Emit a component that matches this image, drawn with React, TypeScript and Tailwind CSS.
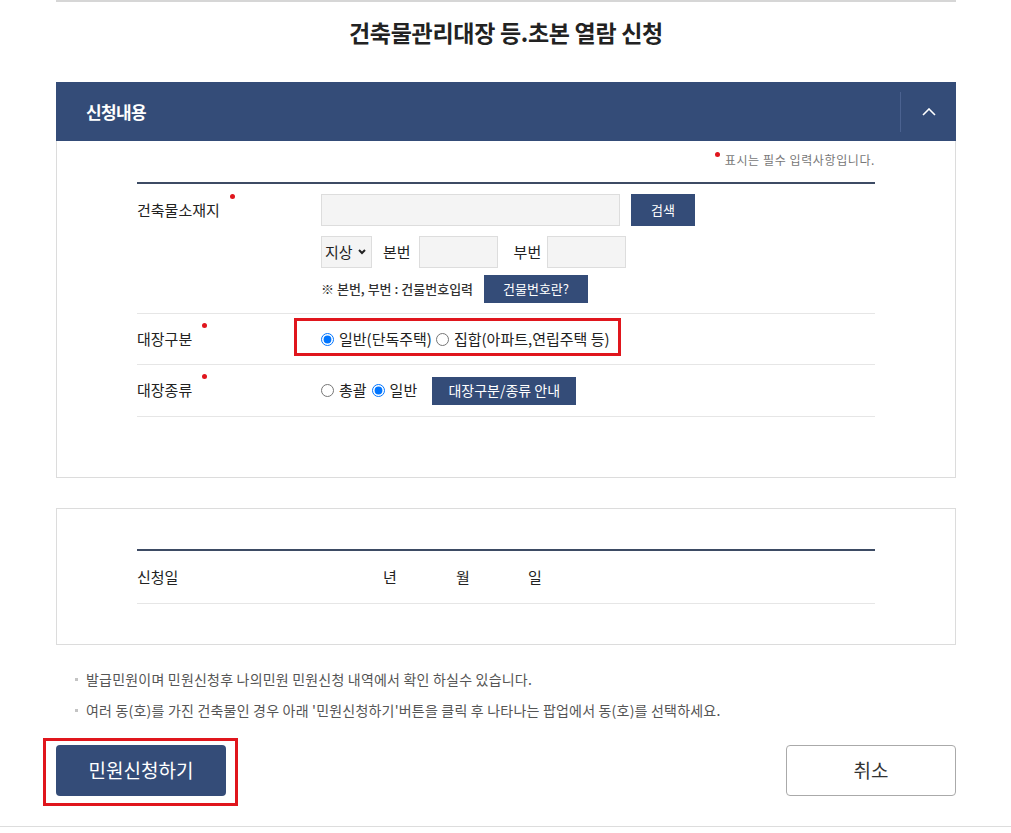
import { ReactNode } from 'react';

const FONT = "font-['Noto_Sans_CJK_KR','Noto_Sans',sans-serif]";

function Required({ children }: { children: ReactNode }) {
  return (
    <span className="relative">
      {children}
      <span className="absolute right-[-15px] top-[-5px] h-[5px] w-[5px] rounded-full bg-[#e0161d]" />
    </span>
  );
}

function NavyButton({ children, className = '' }: { children: ReactNode; className?: string }) {
  return <button className={`bg-[#344c78] text-white ${className}`}>{children}</button>;
}

function Radio({ checked, label, name }: { checked?: boolean; label: string; name: string }) {
  return (
    <label className="flex items-center gap-[5px]">
      <input type="radio" name={name} defaultChecked={checked} className="m-0 h-[13px] w-[13px]" />
      <span>{label}</span>
    </label>
  );
}

export default function App() {
  return (
    <div className={`min-h-[833px] w-[1011px] bg-white text-[#333] ${FONT}`}>
      <div className="ml-[56px] w-[900px]">
        <div className="h-[2px] bg-[#d6d6d6]" />
        <h1 className="pt-[15px] pb-[35px] text-center text-[23px] font-bold leading-[30px] tracking-[-0.3px] text-[#222]">
          건축물관리대장 등.초본 열람 신청
        </h1>

        {/* 신청내용 */}
        <div className="flex h-[59px] items-center justify-between bg-[#344c78]">
          <h2 className="pl-[30px] text-[17px] font-bold tracking-[-0.6px] text-white">신청내용</h2>
          <div className="flex h-[40px] w-[56px] items-center justify-center border-l border-[#4b6290]">
            <svg width="14" height="8" viewBox="0 0 14 8" fill="none">
              <path d="M1 7L7 1L13 7" stroke="white" strokeWidth="1.6" />
            </svg>
          </div>
        </div>

        <div className="border border-t-0 border-[#dcdcdc] px-[80px] pb-[60px]">
          <p className="flex justify-end pt-[10px] pb-[13px] text-[12px] leading-[18px] tracking-[0.6px] text-[#777]">
            <span className="relative pl-[8px]">
              <span className="absolute left-[-2px] top-[1px] h-[5px] w-[5px] rounded-full bg-[#e0161d]" />
              표시는 필수 입력사항입니다.
            </span>
          </p>
          <div className="h-[2px] bg-[#3d4b64]" />

          {/* 건축물소재지 */}
          <div className="flex border-b border-[#e6e6e6] pt-[10px] pb-[10px] text-[15px]">
            <div className="w-[184px] leading-[32px] text-[#222]">
              <Required>건축물소재지</Required>
            </div>
            <div className="flex flex-col">
              <div className="flex gap-[11px]">
                <input className="h-[32px] w-[299px] border border-[#dddddd] bg-[#f4f4f4]" />
                <NavyButton className="h-[32px] w-[64px] text-[13px]">검색</NavyButton>
              </div>
              <div className="mt-[10px] flex items-center">
                <div className="relative">
                  <select className="h-[32px] w-[51px] appearance-none border border-[#dddddd] bg-[#f4f4f4] pl-[3px] text-[15px] text-[#222]">
                    <option>지상</option>
                    <option>지하</option>
                  </select>
                  <svg className="pointer-events-none absolute right-[6px] top-[13px]" width="8" height="6" viewBox="0 0 8 6" fill="none">
                    <path d="M1 1L4 4L7 1" stroke="#222" strokeWidth="2" />
                  </svg>
                </div>
                <span className="ml-[11px] text-[#222]">본번</span>
                <input className="ml-[8px] h-[32px] w-[79px] border border-[#dddddd] bg-[#f4f4f4]" />
                <span className="ml-[16px] text-[#222]">부번</span>
                <input className="ml-[6px] h-[32px] w-[79px] border border-[#dddddd] bg-[#f4f4f4]" />
              </div>
              <div className="mt-[7px] flex items-center">
                <span className="w-[163px] text-[13px] font-medium text-[#333]">※ 본번, 부번 : 건물번호입력</span>
                <NavyButton className="h-[28px] w-[104px] text-[13px]">건물번호란?</NavyButton>
              </div>
            </div>
          </div>

          {/* 대장구분 */}
          <div className="flex h-[51px] items-center border-b border-[#e6e6e6] text-[15px]">
            <div className="w-[184px] text-[#222]">
              <Required>대장구분</Required>
            </div>
            <div className="relative flex items-center gap-[4px] text-[#222]">
              <Radio name="gubun" checked label="일반(단독주택)" />
              <Radio name="gubun" label="집합(아파트,연립주택 등)" />
              <span className="absolute left-[-27px] top-[-10px] h-[38px] w-[327px] border-[3px] border-[#e0161d]" />
            </div>
          </div>

          {/* 대장종류 */}
          <div className="flex h-[52px] items-center border-b border-[#e6e6e6] text-[15px]">
            <div className="w-[184px] text-[#222]">
              <Required>대장종류</Required>
            </div>
            <div className="flex items-center gap-[5px] text-[#222]">
              <Radio name="kind" label="총괄" />
              <Radio name="kind" checked label="일반" />
              <NavyButton className="ml-[10px] h-[28px] w-[144px] text-[14px]">대장구분/종류 안내</NavyButton>
            </div>
          </div>
        </div>

        {/* 신청일 */}
        <div className="mt-[30px] border border-[#dcdcdc] px-[80px] pt-[40px] pb-[40px]">
          <div className="h-[2px] bg-[#3d4b64]" />
          <div className="flex h-[53px] items-center border-b border-[#e6e6e6] text-[15px] text-[#222]">
            <div className="w-[246px]">신청일</div>
            <span className="w-[73px]">년</span>
            <span className="w-[72px]">월</span>
            <span>일</span>
          </div>
        </div>

        <ul className="mt-[24px] flex flex-col gap-[11px] text-[14px] leading-[20px] tracking-[0.2px] text-[#555]">
          <li className="flex items-center">
            <span className="ml-[19px] mr-[8px] h-[3px] w-[3px] bg-[#c4c4c4]" />
            발급민원이며 민원신청후 나의민원 민원신청 내역에서 확인 하실수 있습니다.
          </li>
          <li className="flex items-center">
            <span className="ml-[19px] mr-[8px] h-[3px] w-[3px] bg-[#c4c4c4]" />
            여러 동(호)를 가진 건축물인 경우 아래 '민원신청하기'버튼을 클릭 후 나타나는 팝업에서 동(호)를 선택하세요.
          </li>
        </ul>

        <div className="mt-[25px] flex justify-between">
          <div className="relative">
            <button className="h-[51px] w-[170px] rounded-[4px] bg-[#344c78] text-[19px] text-white">민원신청하기</button>
            <span className="absolute left-[-13px] top-[-7px] h-[68px] w-[195px] border-[3px] border-[#e0161d]" />
          </div>
          <button className="h-[51px] w-[170px] rounded-[4px] border border-[#aaaaaa] bg-white text-[19px] text-[#333]">취소</button>
        </div>
      </div>
      <div className="mt-[30px] h-px bg-[#dddddd]" />
    </div>
  );
}
